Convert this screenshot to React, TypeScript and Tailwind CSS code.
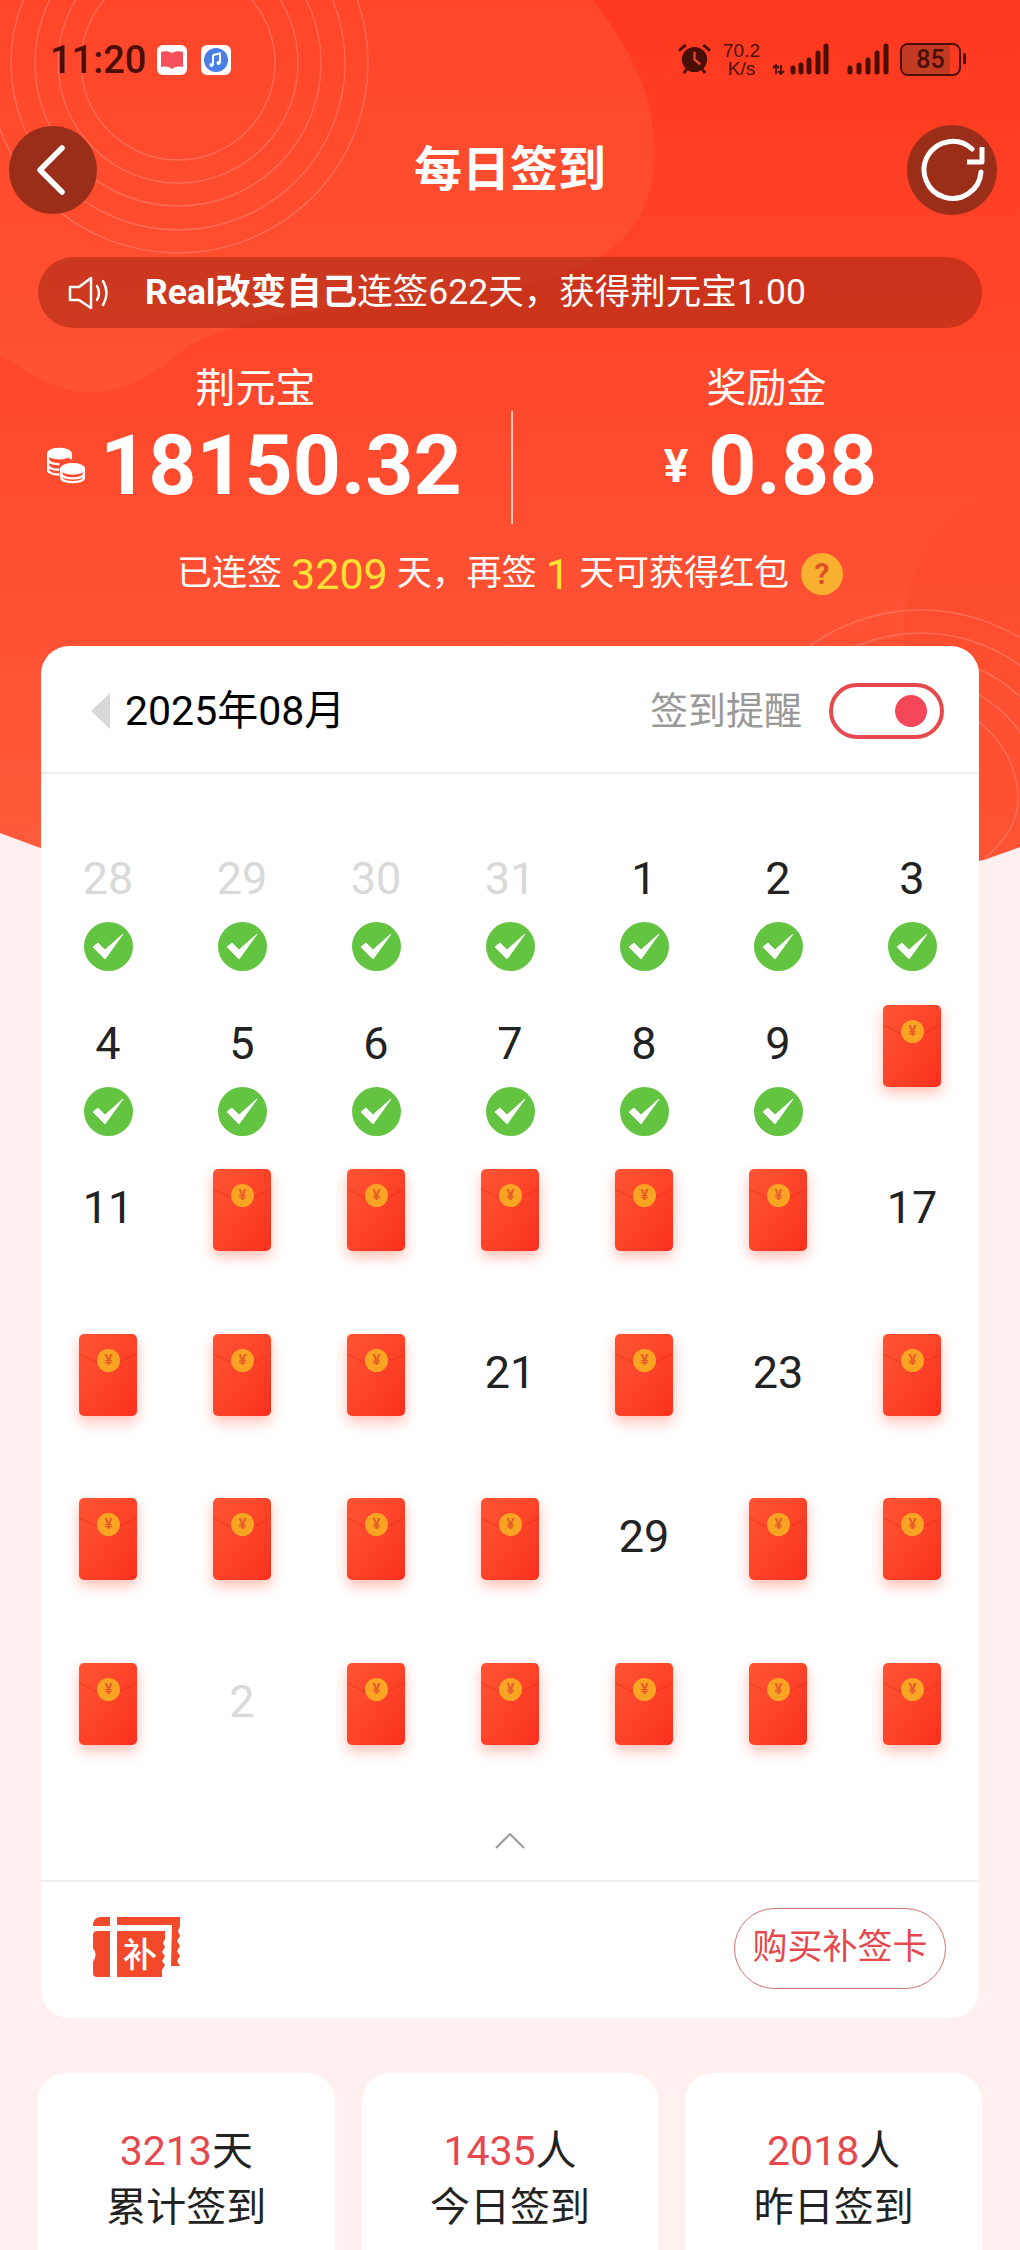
import React from "react";

const cjk = "font-['Roboto','Noto_Sans_CJK_SC',sans-serif]";

type Cell = { label?: string; muted?: boolean; checked?: boolean };

const n = (label: string, checked = false, muted = false): Cell => ({ label, checked, muted });
const env: Cell = {};

const days: Cell[] = [
  n("28", true, true), n("29", true, true), n("30", true, true), n("31", true, true), n("1", true), n("2", true), n("3", true),
  n("4", true), n("5", true), n("6", true), n("7", true), n("8", true), n("9", true), env,
  n("11"), env, env, env, env, env, n("17"),
  env, env, env, n("21"), env, n("23"), env,
  env, env, env, env, n("29"), env, env,
  env, n("2", false, true), env, env, env, env, env,
];

const stats = [
  { value: "3213", unit: "天", label: "累计签到" },
  { value: "1435", unit: "人", label: "今日签到" },
  { value: "2018", unit: "人", label: "昨日签到" },
];

const Backdrop = () => (
  <svg className="absolute left-0 top-0" width="1020" height="960" viewBox="0 0 1020 960" fill="none">
    <defs>
      <linearGradient id="hero" x1="0" y1="0" x2="0" y2="1">
        <stop offset="0" stopColor="#ff381f" />
        <stop offset="1" stopColor="#ff5e3e" />
      </linearGradient>
    </defs>
    <path d="M0 0H1020V847Q510 1030 0 833Z" fill="url(#hero)" />
    <path d="M0 0H593C640 60 665 120 650 190C630 270 540 290 400 302C300 310 240 320 190 345C150 380 110 400 70 390C40 382 20 368 0 355Z" fill="#ff6a48" fillOpacity="0.28" />
    <path d="M1020 495C960 495 915 540 905 610L900 870L985 860L1020 847Z" fill="#fb4a2c" fillOpacity="0.5" />
    <g stroke="#ffffff" strokeOpacity="0.18" strokeWidth="1.500">
      {[97, 120, 143, 167, 190].map((r) => (
        <circle key={r} cx="178" cy="63" r={r} />
      ))}
      {[97, 120, 143, 167, 190].map((r) => (
        <path key={r} d={`M${921 - r} 800A${r} ${r} 0 0 1 ${921 + r} 800`} />
      ))}
      <path d="M1018 800Q1018 830 985 858" />
    </g>
  </svg>
);

const StatusBar = () => (
  <div className="h-[120px] flex justify-between pl-[50px] pr-[54px] pt-[40px]">
    <div className="flex items-start gap-[11px]">
      <span className="text-[38px] leading-[40px] font-medium text-[#4a0e05]">11:20</span>
      <div className="flex gap-[14px] mt-[5px]">
        <svg width="30" height="30" viewBox="0 0 30 30">
          <rect width="30" height="30" rx="6" fill="#fff" />
          <path d="M15 8C12 6 7 6 4 7V22C7 21 12 21 15 24C18 21 23 21 26 22V7C23 6 18 6 15 8Z" fill="#f7505a" />
        </svg>
        <svg width="30" height="30" viewBox="0 0 30 30">
          <rect width="30" height="30" rx="6" fill="#fff" />
          <circle cx="15" cy="15" r="12" fill="#4a7fe8" />
          <path d="M12 10L19 8.500V18M12 10V20" stroke="#fff" strokeWidth="2" fill="none" />
          <circle cx="10.500" cy="20" r="2" fill="#fff" />
          <circle cx="17.500" cy="18" r="2" fill="#fff" />
        </svg>
      </div>
    </div>
    <div className="flex items-start text-[#4a0e05]">
      <svg width="33" height="32" viewBox="0 0 34 33" className="mt-[3px]">
        <circle cx="17" cy="17" r="13" fill="#4a0e05" />
        <path d="M17 9V17L23 22" stroke="#e8452c" strokeWidth="2.500" fill="none" />
        <path d="M1 8L8 2M33 8L26 2M6 31L9 27M28 31L25 27" stroke="#4a0e05" strokeWidth="3" />
      </svg>
      <div className="ml-[9px] mt-[2px] w-[43px] text-center text-[19px] leading-[18px] font-['Liberation_Sans',sans-serif]">
        <div>70.2</div>
        <div>K/s</div>
      </div>
      <svg width="118" height="34" viewBox="0 0 118 34" className="ml-[9px] mt-[1px]">
        <path d="M4 24V33M1 27L4 24L7 27M9 33V24M6 30L9 33L12 30" stroke="#4a0e05" strokeWidth="1.800" fill="none" />
        <g stroke="#4a0e05" strokeLinecap="round" strokeWidth="5" fill="none">
          <path d="M21 27V31M29 24V31M37 19V31M46 12V31M54 5V31" />
          <path d="M78 27V31M87 24V31M96 19V31M105 12V31M114 5V31" />
        </g>
      </svg>
      <div className="relative ml-[10px] mt-[3px] w-[61px] h-[33px] rounded-[8px] border-[2px] border-[#4a0e05] flex items-center justify-center overflow-hidden">
        <div className="absolute left-0 top-0 bottom-0 w-[85%] bg-[#c23a22]" />
        <span className="relative text-[25px] font-medium leading-none text-[#4a0e05]">85</span>
      </div>
      <div className="ml-[2px] mt-[13px] w-[3px] h-[11px] rounded-[2px] bg-[#4a0e05]" />
    </div>
  </div>
);

const NavBar = () => (
  <div className="px-[9px] mt-[5px] flex items-center justify-between">
    <button className="w-[88px] h-[88px] rounded-full bg-[#9a2e19] flex items-center justify-center">
      <svg width="34" height="52" viewBox="0 0 34 52" fill="none" className="-ml-[4px]">
        <path d="M28 4L6 26L28 48" stroke="#fff" strokeWidth="5.500" strokeLinecap="round" strokeLinejoin="round" />
      </svg>
    </button>
    <h1 className="flex-1 pl-[16px] text-center text-[48px] leading-[60px] font-bold text-white">每日签到</h1>
    <button className="w-[90px] h-[90px] mr-[14px] rounded-full bg-[#9a2e19] flex items-center justify-center">
      <svg width="66" height="66" viewBox="0 0 66 66" fill="none">
        <path d="M62 35A28.500 28.500 0 1 1 53 12" stroke="#fff" strokeWidth="5" strokeLinecap="round" />
        <path d="M63 10V25H48" stroke="#fff" strokeWidth="5" strokeLinejoin="round" fill="none" />
      </svg>
    </button>
  </div>
);

const Ticker = () => (
  <div className="mx-[38px] mt-[42px] h-[71px] rounded-full bg-[#8f1f0c]/45 flex items-center pl-[30px] text-white text-[35.5px]">
    <svg width="44" height="34" viewBox="0 0 44 34" fill="none" stroke="#fff" strokeWidth="2.500" strokeLinejoin="round" strokeLinecap="round">
      <path d="M2 11H11L23 2V32L11 24H2Z" />
      <path d="M29 10Q33 17 29 24M35 5Q42 17 35 29" />
    </svg>
    <span className="ml-[33px] font-bold">Real改变自己</span>
    <span>连签622天，获得荆元宝1.00</span>
  </div>
);

const Coins = () => (
  <svg width="38" height="38" viewBox="0 0 40 40" fill="none" stroke="#fff" strokeWidth="2.500">
    <ellipse cx="13" cy="7" rx="12" ry="5" fill="#fff" />
    <path d="M1 7V24C1 27 6 29 13 29M1 13C1 16 6 18 13 18M1 19C1 22 6 24 13 24M25 7V13" />
    <ellipse cx="27" cy="23" rx="12" ry="5" fill="#fff" />
    <path d="M15 23V32C15 35 20 37 27 37C34 37 39 35 39 32V23M15 28C15 31 20 33 27 33C34 33 39 31 39 28" />
  </svg>
);

const Balance = () => (
  <>
    <div className="mt-[31px] flex text-white">
      <div className="w-[511px]">
        <div className="text-[40px] leading-[60px] text-center">荆元宝</div>
        <div className="flex items-center pl-[47px] h-[94px]">
          <Coins />
          <span className="ml-[15px] text-[84px] leading-[94px] font-bold">18150.32</span>
        </div>
      </div>
      <div className="w-[2px] h-[113px] mt-[52px] bg-white/70" />
      <div className="flex-1">
        <div className="text-[40px] leading-[60px] text-center">奖励金</div>
        <div className="flex items-center justify-center h-[94px] pl-[8px]">
          <span className="text-[46px] font-bold mr-[20px]">¥</span>
          <span className="text-[84px] leading-[94px] font-bold">0.88</span>
        </div>
      </div>
    </div>
    <div className="mt-[25px] flex items-center justify-center text-[35px] leading-[50px] text-white">
      <span>已连签</span>
      <span className="mx-[9px] text-[43px] text-[#ffe135]">3209</span>
      <span>天，再签</span>
      <span className="mx-[9px] text-[43px] text-[#ffe135]">1</span>
      <span>天可获得红包</span>
      <span className="ml-[12px] w-[42px] h-[42px] rounded-full bg-[#f9b02f] flex items-center justify-center text-[30px] font-bold text-[#e2502a]">?</span>
    </div>
  </>
);

const Check = () => (
  <svg width="49" height="49" viewBox="0 0 49 49" className="mt-[13px]">
    <circle cx="24.500" cy="24.500" r="24.500" fill="#63c442" />
    <path d="M9 25L14 21L21 28L39 12L21 37Z" fill="#fff" stroke="#fff" strokeWidth="1" strokeLinejoin="round" />
  </svg>
);

const Envelope = () => (
  <div className="relative mt-[11px] w-[58px] h-[82px] rounded-[5px] bg-gradient-to-br from-[#ff5433] to-[#fa2f1d] shadow-[0_6px_14px_rgba(255,70,40,0.35)]">
    <svg className="absolute left-0 top-0" width="58" height="50" viewBox="0 0 58 50" fill="none">
      <path d="M0 20L29 34L58 20" stroke="#d92a14" strokeOpacity="0.35" strokeWidth="1.500" />
    </svg>
    <div className="absolute left-[18px] top-[15px] w-[23px] h-[23px] rounded-full bg-[#f9a523] flex items-center justify-center text-[15px] font-bold leading-none text-[#ea5b2b]">¥</div>
  </div>
);

const DayCell = ({ cell }: { cell: Cell }) => (
  <div className="h-[164.5px] flex flex-col items-center">
    {cell.label ? (
      <>
        <span className={`mt-[20px] text-[45px] leading-[60px] font-normal ${cell.muted ? "text-[#d9d9d9]" : "text-[#222222]"}`}>{cell.label}</span>
        {cell.checked && <Check />}
      </>
    ) : (
      <Envelope />
    )}
  </div>
);

const TicketIcon = () => (
  <svg width="88" height="62" viewBox="0 0 88 62">
    <path d="M0 18Q0 14 4 14H17V60H4Q0 60 0 56V45Q5 37 0 31Z" fill="#f2492b" />
    <path d="M24 14H72V22L70 26L72 30L69 35L72 39L69 44L72 48L69 53V60H24Z" fill="#f2492b" />
    <path d="M8 0H17V9H0V7Q1 0 8 0ZM24 0H87V9L85 14L87 19L84 24L87 29L84 34L87 39L84 44L87 49H78L79 8H24Z" fill="#f2492b" />
    <text x="47" y="50" textAnchor="middle" fontSize="34" fontWeight="500" fill="#fff" fontFamily="'Noto Sans CJK SC',sans-serif">补</text>
  </svg>
);

const CalendarCard = () => (
  <section className="mx-[41px] mt-[47px] rounded-[28px] bg-white">
    <div className="h-[128px] pt-[3px] border-b-2 border-[#eeeeee] flex items-center pl-[50px] pr-[35px]">
      <div className="w-0 h-0 border-y-[18px] border-y-transparent border-r-[19px] border-r-[#d8d8d8]" />
      <span className="ml-[15px] text-[41px] leading-[50px] text-black">2025年08月</span>
      <span className="ml-auto text-[38px] leading-[50px] text-[#999999]">签到提醒</span>
      <div className="ml-[27px] w-[115px] h-[56px] rounded-full border-[4px] border-[#e5484d] flex items-center justify-end pr-[13px]">
        <div className="w-[32px] h-[32px] rounded-full bg-[#f4475a]" />
      </div>
    </div>
    <div className="pt-[55px] grid grid-cols-7">
      {days.map((cell, i) => (
        <DayCell key={i} cell={cell} />
      ))}
    </div>
    <div className="h-[64px] pt-[17px] flex justify-center items-start">
      <svg width="30" height="16" viewBox="0 0 30 16" fill="none">
        <path d="M1 15L15 1L29 15" stroke="#999999" strokeWidth="2" />
      </svg>
    </div>
    <div className="border-t-2 border-[#eeeeee] h-[138px] flex items-center justify-between pl-[52px] pr-[33px] pb-[4px]">
      <TicketIcon />
      <button className="w-[212px] h-[81px] rounded-full border border-[#d4736f] text-[35px] text-[#e5484d]">购买补签卡</button>
    </div>
  </section>
);

const StatCard = ({ value, unit, label }: { value: string; unit: string; label: string }) => (
  <div className="rounded-t-[28px] bg-white flex flex-col items-center pt-[49px] h-[178px]">
    <div className="text-[41px] leading-[58px] text-[#222222]">
      <span className="text-[#e5484d]">{value}</span>
      {unit}
    </div>
    <div className="text-[40px] leading-[56px] text-[#222222]">{label}</div>
  </div>
);

export default function App() {
  return (
    <div className={`relative w-[1020px] h-[2250px] overflow-hidden bg-[#fff0ef] ${cjk}`}>
      <Backdrop />
      <div className="relative">
        <StatusBar />
        <NavBar />
        <Ticker />
        <Balance />
        <CalendarCard />
        <div className="mx-[38px] mt-[55px] grid grid-cols-3 gap-x-[27px]">
          {stats.map((s) => (
            <StatCard key={s.label} {...s} />
          ))}
        </div>
      </div>
    </div>
  );
}
